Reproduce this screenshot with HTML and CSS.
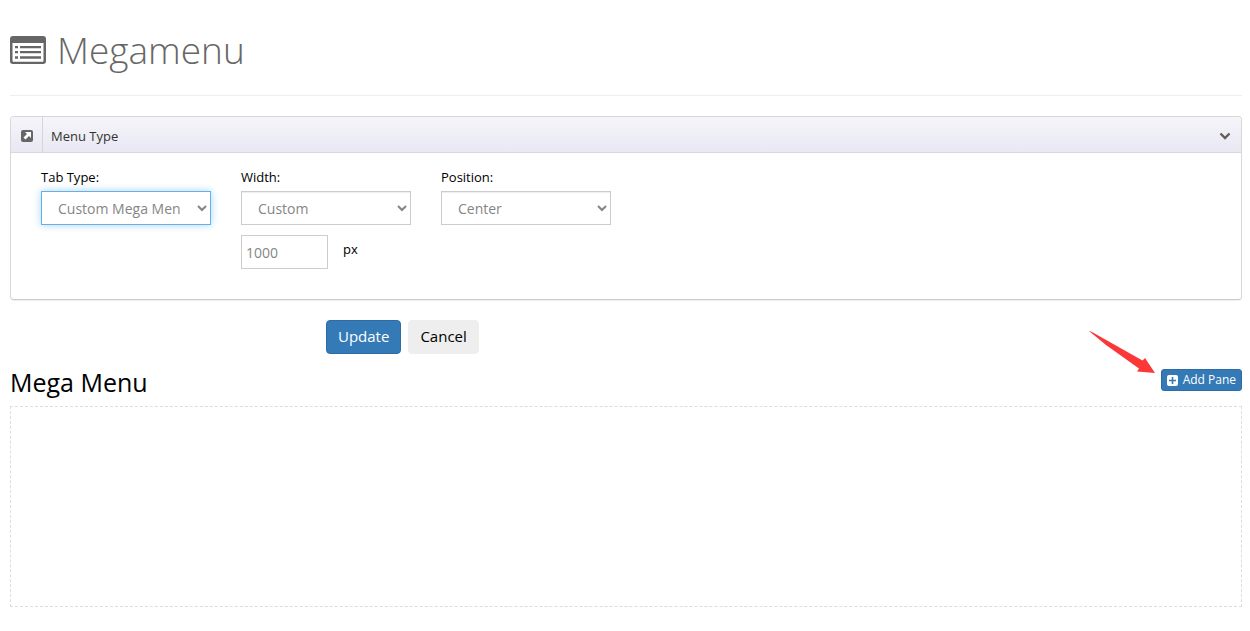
FILE: index.html
```
<!DOCTYPE html>
<html lang="en">
<head>
<meta charset="utf-8">
<title>Megamenu</title>
<link rel="stylesheet" href="styles.css">
</head>
<body>
<main class="page">
  <header class="page-header">
    <svg class="title-icon" viewBox="0 0 36 28" aria-hidden="true">
      <path fill="currentColor" fill-rule="evenodd" d="M3 0H33Q36 0 36 3V25Q36 28 33 28H3Q0 28 0 25V3Q0 0 3 0ZM2.500 7V25Q2.500 25.800 3.300 25.800H32.700Q33.500 25.800 33.500 25V7Z"/>
      <path fill="currentColor" d="M5 10h3v2.300H5zM10 10h21v2.300H10zM5 15h3v2.300H5zM10 15h21v2.300H10zM5 20.200h3v2.500H5zM10 20.200h21v2.500H10z"/>
    </svg>
    <h1 class="title">Megamenu</h1>
  </header>

  <section class="panel">
    <div class="panel-heading">
      <span class="panel-icon">
        <svg class="link-icon" viewBox="0 0 12 12" aria-hidden="true">
          <rect width="12" height="12" rx="2" fill="#666"/>
          <path fill="#fff" d="M4 2H10V8L8 6 4.500 9.500 2.500 7.500 6 4Z"/>
        </svg>
      </span>
      <h2 class="panel-title">Menu Type</h2>
      <button class="collapse" type="button" aria-label="Collapse">
        <svg class="chevron" viewBox="0 0 12 8" aria-hidden="true"><path d="M1.500 1.500 6 6 10.500 1.500" fill="none" stroke="#665c58" stroke-width="2.400"/></svg>
      </button>
    </div>
    <div class="panel-body">
      <div class="field">
        <label class="label" for="tab-type">Tab Type:</label>
        <select class="control active" id="tab-type"><option>Custom Mega Menu</option></select>
      </div>
      <div class="field">
        <label class="label" for="width">Width:</label>
        <select class="control" id="width"><option>Custom</option></select>
        <div class="size-row">
          <input class="control size" id="size" type="text" value="1000">
          <label class="label unit" for="size">px</label>
        </div>
      </div>
      <div class="field">
        <label class="label" for="position">Position:</label>
        <select class="control" id="position"><option>Center</option></select>
      </div>
    </div>
  </section>

  <div class="actions">
    <button class="btn primary" type="button">Update</button>
    <button class="btn" type="button">Cancel</button>
  </div>

  <section>
    <div class="menu-header">
      <h2 class="menu-title">Mega Menu</h2>
      <div class="add-wrap">
        <button class="btn primary small" type="button">
          <svg class="plus" viewBox="0 0 11 11" aria-hidden="true"><rect width="11" height="11" rx="2" fill="#fff"/><path d="M5.500 2V9M2 5.500H9" stroke="#337ab7" stroke-width="1.600"/></svg>
          Add Pane
        </button>
        <svg class="pointer" viewBox="0 0 66 44" aria-hidden="true"><path fill="#fb3737" d="M0 0Q1 0 3 1L53.500 29.500 56 27 66 42 48 40.500 50 37.500 17 14Z"/></svg>
      </div>
    </div>
    <div class="canvas"></div>
  </section>
</main>
</body>
</html>
```

FILE: styles.css
```
* { box-sizing: border-box; }
body {
  margin: 0;
  background: #fff;
  color: #000;
  font: 13px/20px "Open Sans", "Noto Sans", sans-serif;
}
h1, h2 { margin: 0; font-weight: 400; }
button, input, select { font-family: inherit; }
.page { padding: 0 8px 24px 10px; }

.page-header {
  display: flex;
  align-items: center;
  gap: 11px;
  height: 96px;
  padding-bottom: 4px;
  margin-bottom: 20px;
  border-bottom: 1px solid #eee;
  color: #666;
}
.title-icon { width: 36px; height: 28px; margin-top: 8px; }
.title { margin-top: 8px; font-size: 37px; line-height: 44px; font-weight: 300; }

.panel {
  border: 1px solid #d8d8d8;
  border-bottom-color: #ccc;
  border-radius: 4px;
  box-shadow: 0 1px 1px #eee;
}
.panel-heading {
  display: flex;
  align-items: stretch;
  height: 36px;
  border-bottom: 1px solid #d8d8dc;
  border-radius: 3px 3px 0 0;
  background: linear-gradient(#f5f5fa, #e9e8f3);
}
.panel-icon {
  display: flex;
  align-items: center;
  justify-content: center;
  width: 32px;
  border-right: 1px solid #d5d5d9;
}
.link-icon { width: 12px; height: 12px; margin-top: 2px; }
.panel-title { flex: 1; padding-left: 8px; color: #333; font-size: 13px; line-height: 38px; }
.collapse { padding: 2px 10px 0; border: 0; background: none; line-height: 0; }
.chevron { width: 12px; height: 8px; }

.panel-body { display: flex; gap: 30px; min-height: 146px; padding: 14px 30px 30px; }
.field { width: 170px; }
.label { display: block; line-height: 20px; margin-bottom: 4px; }
.control {
  display: block;
  width: 100%;
  height: 34px;
  padding: 6px 14px 6px 12px;
  border: 1px solid #ccc;
  border-radius: 0;
  background: #fff;
  box-shadow: inset 0 1px 1px #eee;
  color: #858585;
  font-size: 14px;
  line-height: 20px;
}
.active { border-color: #66afe9; box-shadow: 0 0 8px #a8d4f5; }
.size-row { display: flex; gap: 15px; margin-top: 10px; }
.size { width: 87px; padding: 6px 4px; box-shadow: none; }
.unit { padding-top: 4px; }

.actions { display: flex; gap: 7px; margin: 20px 0 12px 316px; }
.btn {
  height: 34px;
  padding: 0 11px 2px;
  border: 1px solid #eee;
  border-radius: 4px;
  background: #eee;
  color: #000;
  font-size: 15px;
  line-height: 20px;
}
.primary { border-color: #2e6da4; background: #337ab7; color: #fff; }
.small {
  display: flex;
  align-items: center;
  gap: 5px;
  height: 22px;
  padding: 0 5px;
  border-radius: 3px;
  font-size: 12px;
}
.plus { width: 11px; height: 11px; }

.menu-header { display: flex; align-items: center; justify-content: space-between; height: 32px; margin-bottom: 8px; }
.menu-title { font-size: 25px; line-height: 32px; }
.add-wrap { position: relative; margin-bottom: 4px; }
.pointer { position: absolute; right: 87px; bottom: 16px; width: 66px; height: 44px; }
.canvas { min-height: 201px; border: 1px dashed #ddd; }
```
